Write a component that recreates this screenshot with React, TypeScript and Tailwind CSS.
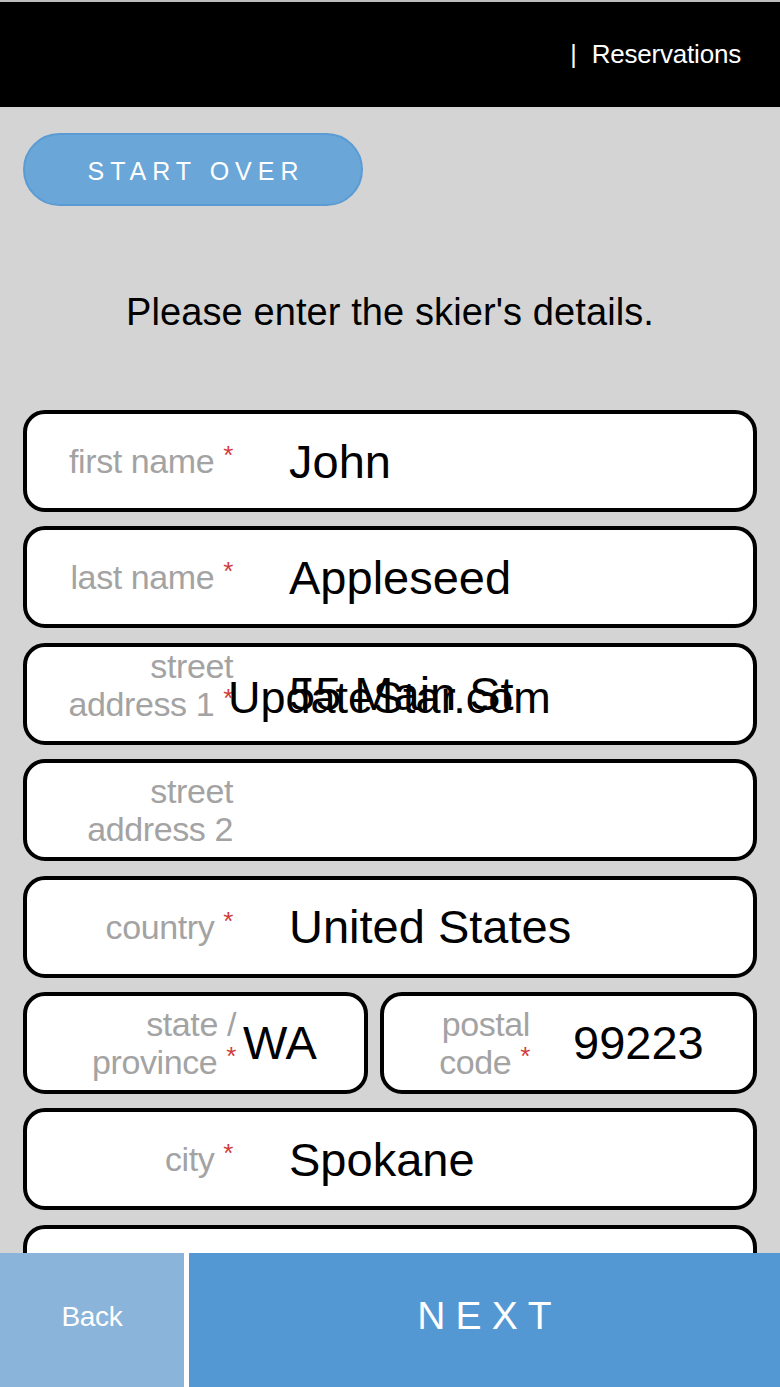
import React from "react";

const font = { fontFamily: '"Liberation Sans", Arial, sans-serif' };

type FieldProps = {
  label: string[];
  required?: boolean;
  value?: string;
  labelClass: string;
  valueClass: string;
  boxClass?: string;
};

const Field = ({ label, required, value, labelClass, valueClass, boxClass = "" }: FieldProps) => (
  <div
    className={`h-[102px] bg-white border-[4px] border-black rounded-[22px] flex items-center overflow-hidden ${boxClass}`}
  >
    <div className={`shrink-0 text-right text-[34px] leading-[38px] text-[#a3a3a3] tracking-[-0.4px] ${labelClass}`}>
      {label.map((line, i) => (
        <div key={i}>
          {line}
          {required && i === label.length - 1 && (
            <span className="relative top-[-9px] text-[#d23c3c] text-[26px] leading-none ml-[9px]">*</span>
          )}
        </div>
      ))}
    </div>
    {value && <div className={`text-[47px] leading-none text-black whitespace-nowrap ${valueClass}`}>{value}</div>}
  </div>
);

const App = () => {
  return (
    <div className="min-h-[1387px] bg-[#d4d4d4] relative" style={font}>
      {/* header */}
      <div className="h-[107px] bg-black border-t-[2px] border-[#bdbdbd] flex items-center justify-end pr-[39px] text-white">
        <span className="text-[25px] mr-[15px]">|</span>
        <span className="text-[26px] tracking-[-0.2px]">Reservations</span>
      </div>

      <div className="px-[23px] pb-[200px]">
        <button className="mt-[26px] w-[340px] h-[73px] rounded-full bg-[#6aa6d7] border-[2px] border-[#5b9bd4] text-white text-[25px] tracking-[0.24em] pl-[6px] pt-[4px]">
          START OVER
        </button>

        <h1 className="mt-[84px] h-[44px] text-center text-[38px] leading-[44px] text-black tracking-[0.1px]">
          Please enter the skier's details.
        </h1>

        <div className="mt-[76px] flex flex-col gap-[14.4px]">
          <Field label={["first name"]} required value="John" labelClass="w-[206px]" valueClass="ml-[56px]" />
          <Field label={["last name"]} required value="Appleseed" labelClass="w-[206px]" valueClass="ml-[56px]" />
          <Field
            label={["street", "address 1"]}
            required
            value="55 Main St"
            labelClass="w-[206px] relative top-[-9px]"
            valueClass="ml-[56px]"
          />
          <Field label={["street", "address 2"]} labelClass="w-[206px]" valueClass="ml-[56px]" />
          <Field label={["country"]} required value="United States" labelClass="w-[206px]" valueClass="ml-[56px]" />
          <div className="flex gap-[12px]">
            <Field
              label={["state /", "province"]}
              required
              value="WA"
              labelClass="w-[209px]"
              valueClass="ml-[7px]"
              boxClass="w-[345px]"
            />
            <Field
              label={["postal", "code"]}
              required
              value="99223"
              labelClass="w-[146px]"
              valueClass="ml-[43px]"
              boxClass="flex-1"
            />
          </div>
          <Field label={["city"]} required value="Spokane" labelClass="w-[206px]" valueClass="ml-[56px]" />
          <Field label={["phone"]} required labelClass="w-[206px]" valueClass="ml-[56px]" />
        </div>
      </div>

      {/* watermark */}
      <div className="absolute left-[228px] top-[675px] text-[45px] leading-none text-black pointer-events-none">
        UpdateStar.com
      </div>

      {/* footer */}
      <div className="fixed bottom-0 left-0 right-0 h-[134px] flex bg-white">
        <button className="w-[184px] h-full bg-[#8ab4da] text-white text-[28px] tracking-[-0.3px] pb-[6px]">Back</button>
        <button className="ml-[5px] flex-1 h-full bg-[#5398d3] text-white text-[39px] tracking-[0.26em] pl-[10px] pb-[8px]">
          NEXT
        </button>
      </div>
    </div>
  );
};

export default App;
